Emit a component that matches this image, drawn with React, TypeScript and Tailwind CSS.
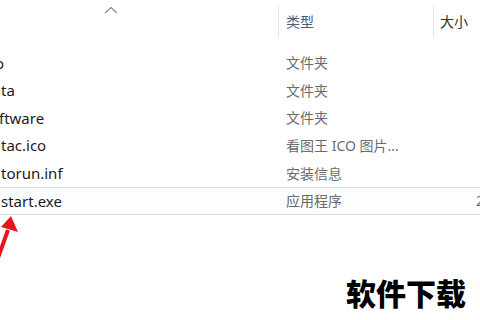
const ROWS: { name: string; type: string; size?: string; selected?: boolean }[] = [
  { name: "o", type: "文件夹" },
  { name: "ta", type: "文件夹" },
  { name: "ftware", type: "文件夹" },
  { name: "tac.ico", type: "看图王 ICO 图片..." },
  { name: "torun.inf", type: "安装信息" },
  { name: "start.exe", type: "应用程序", size: "2", selected: true },
];

const FONT = "font-['Noto_Sans','Noto_Sans_CJK_SC',sans-serif]";

export default function App() {
  return (
    <div className={`relative h-[320px] w-[480px] overflow-hidden bg-white ${FONT}`}>
      {/* Header */}
      <div className="flex h-[49px] items-start pt-[5px]">
        <div className="relative h-[33px] w-[278px]">
          <svg className="absolute left-[104px] top-[1px]" width="14" height="8" viewBox="0 0 14 8">
            <path d="M1 7 L7 1.5 L13 7" fill="none" stroke="#8a8a8a" strokeWidth="1.2" />
          </svg>
        </div>
        <div className="flex h-[33px] w-[155px] items-center border-l border-[#e8e8e8] pl-[7px] text-[14px] text-[#4c607a]">
          类型
        </div>
        <div className="flex h-[33px] flex-1 items-center border-l border-[#e8e8e8] pl-[6px] text-[14px] text-[#333]">
          大小
        </div>
      </div>

      {/* Rows */}
      <div className="flex flex-col">
        {ROWS.map((r) => (
          <div
            key={r.name}
            className={`flex h-[27.6px] items-center ${
              r.selected ? "border-y border-[#cfdde9] bg-[#fbfdff]" : "border-y border-transparent"
            }`}
          >
            <div className={`w-[278px] text-[15px] text-[#1b1b1b] ${r.name === "o" ? "-ml-[5px]" : r.name === "ftware" ? "-ml-[1px]" : "ml-[1px]"}`}>
              {r.name}
            </div>
            <div className={`w-[155px] pl-[8px] text-[14px] text-[#6b6b6b] ${r.name === "o" ? "ml-[5px]" : r.name === "ftware" ? "ml-[1px]" : "-ml-[1px]"}`}>
              {r.type}
            </div>
            <div className="flex-1 pr-[0px] text-right text-[14px] text-[#6b6b6b] -mr-[4px]">{r.size}</div>
          </div>
        ))}
      </div>

      {/* Red arrow */}
      <svg className="absolute left-0 top-[212px]" width="24" height="50" viewBox="0 0 24 50">
        <path d="M-2 46 L8 18" stroke="#e8141b" strokeWidth="4" fill="none" />
        <path d="M11 4 L18 20 L1 15 Z" fill="#e8141b" />
      </svg>

      {/* Watermark */}
      <div className="absolute left-[346px] top-[274px] text-[30px] font-black leading-[36px] tracking-[0px] text-black font-['Noto_Sans_CJK_SC',sans-serif]">
        软件下载
      </div>
    </div>
  );
}
